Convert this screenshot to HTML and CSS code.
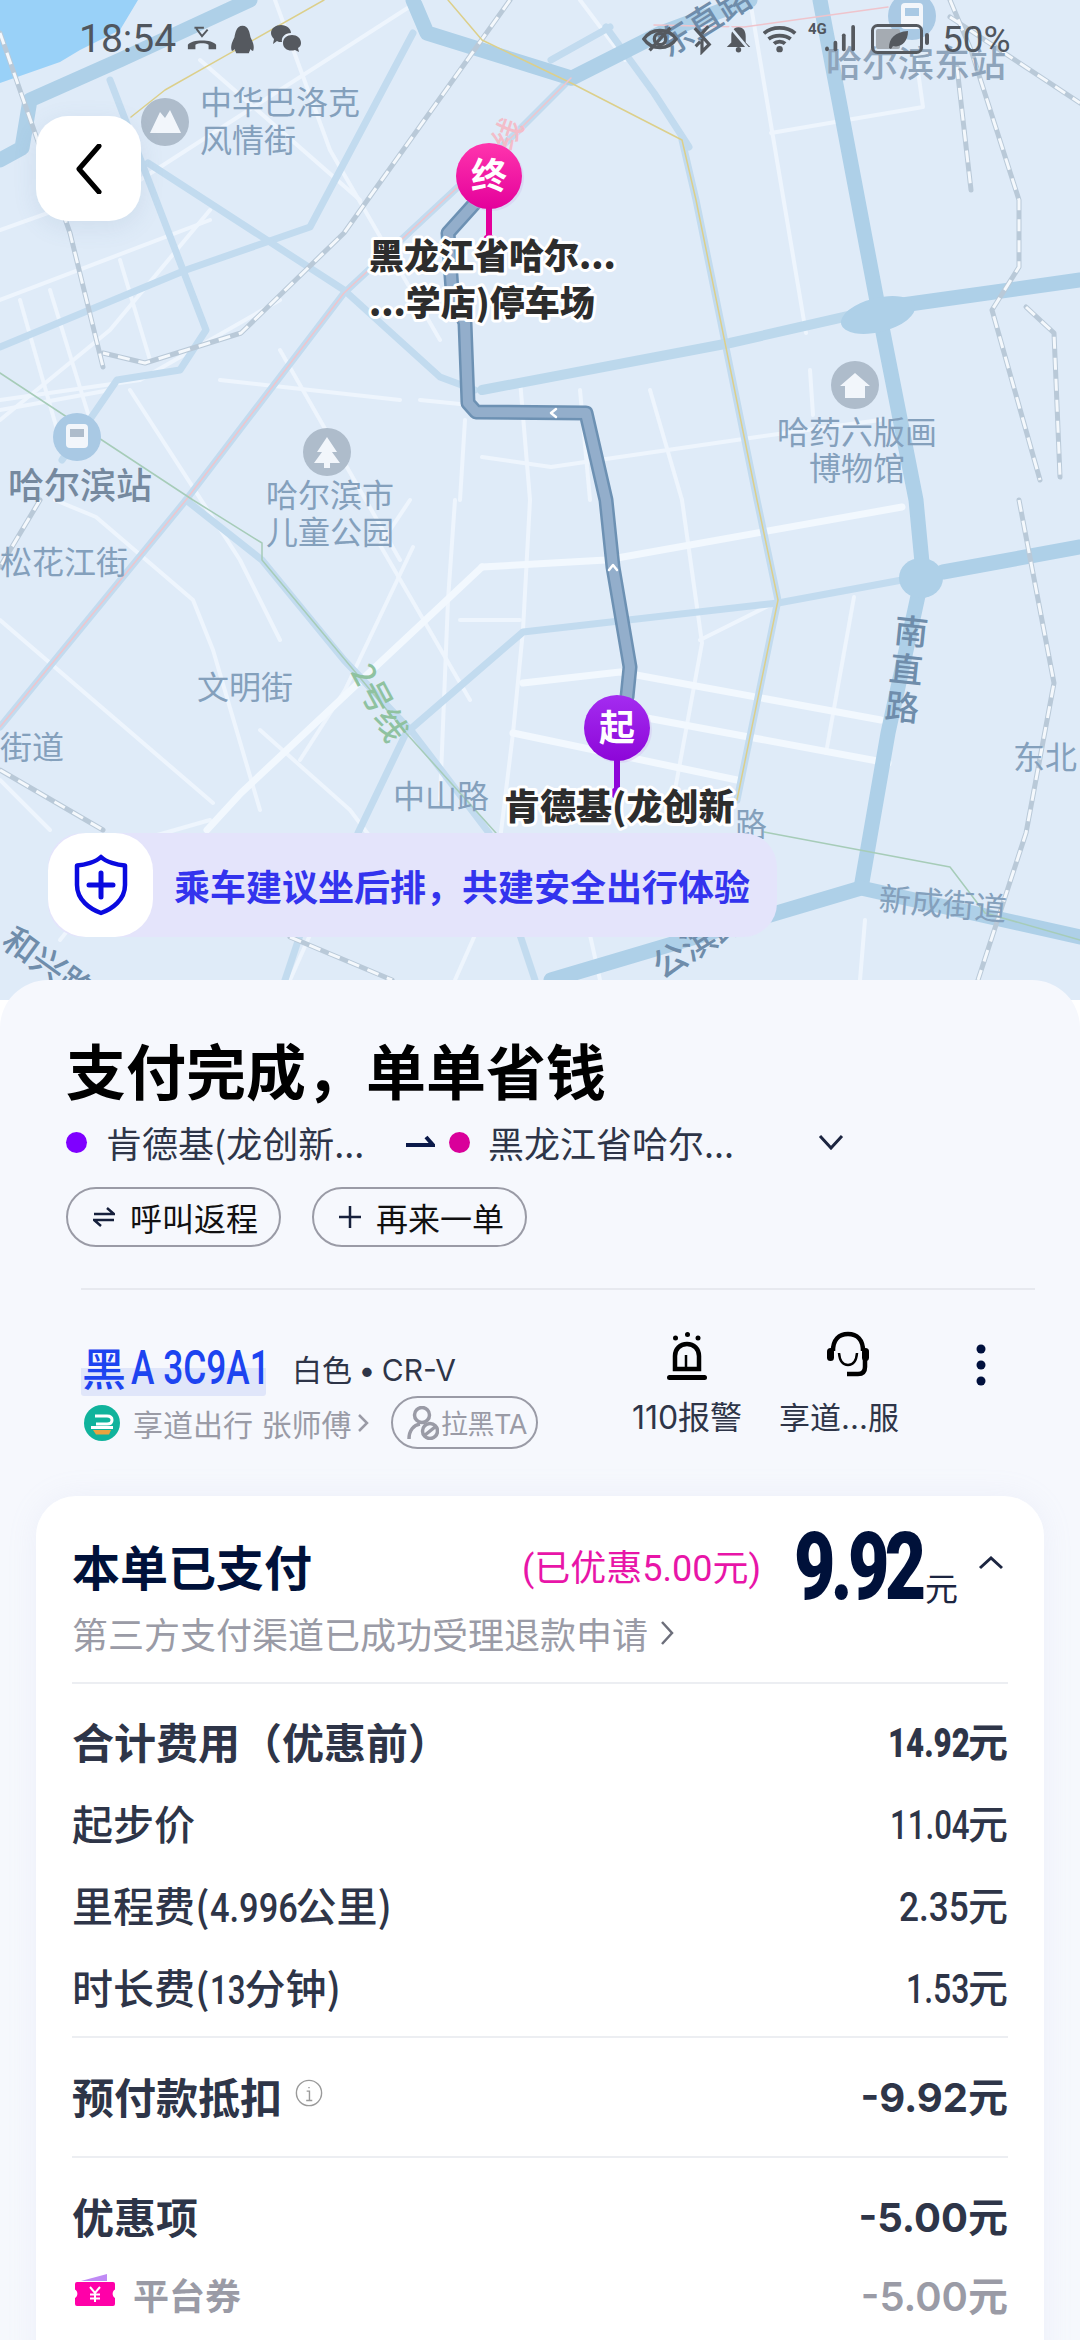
FILE: index.html
```html
<!DOCTYPE html>
<html lang="zh">
<head>
<meta charset="utf-8">
<title>支付完成</title>
<link rel="stylesheet" href="styles.css">
</head>
<body>
<div class="page">
  <section class="map">
    <svg class="map-svg" viewBox="0 0 1080 1000" width="1080" height="1000">
      <defs>
        <linearGradient id="pinEnd" x1="0" y1="0" x2="0" y2="1"><stop offset="0" stop-color="#ff35ad"/><stop offset="1" stop-color="#e4009b"/></linearGradient>
        <linearGradient id="pinStart" x1="0" y1="0" x2="0" y2="1"><stop offset="0" stop-color="#a42cf0"/><stop offset="1" stop-color="#8d06d8"/></linearGradient>
      </defs>
      <path class="water" d="M0 0H138L120 30L80 50L60 62L0 83Z"/>

      <g class="white">
        <path d="M771 133L923 107L916 57"/><path d="M750 0L806 333"/><path d="M580 0L625 60"/>
        <path d="M275 0L330 150L440 340"/><path d="M200 60L360 200"/><path d="M220 380L400 400"/>
        <path d="M0 230L140 180L420 0"/><path d="M0 300L210 220"/><path d="M0 420L110 330L210 210"/>
        <path d="M20 300L60 440"/><path d="M50 290L90 420"/><path d="M120 260L150 360"/>
        <path d="M0 400L140 380L280 300"/><path d="M0 410L110 390"/>
        <path d="M130 390L240 560L280 640"/><path d="M280 350L400 560"/><path d="M420 400L470 405"/>
        <path d="M465 420L460 500"/><path d="M520 380L530 500"/><path d="M580 390L590 500"/>
        <path d="M650 390L682 500"/><path d="M810 370L813 415"/>
        <path d="M482 457L551 467L757 437L880 420"/>
        <path d="M530 500L523 630L513 733L500 840"/><path d="M682 500L702 643L675 790"/>
        <path d="M854 597L826 753"/><path d="M455 500L448 600L440 800"/>
        <path d="M0 620L213 803"/><path d="M55 500L96 517L193 600L213 650L260 810"/>
        <path d="M413 547L345 690L300 760"/><path d="M410 500L380 545L470 700"/>
        <path d="M260 730L350 810L380 850"/><path d="M460 620L520 620"/>
        <path d="M700 640L780 600"/><path d="M0 780L50 830"/>
        <path d="M310 935L290 980"/><path d="M475 935L455 980"/><path d="M590 935L600 980"/><path d="M865 920L860 980"/>
        <path d="M60 940L140 840L210 820"/>
      </g>
      <g class="white-b">
        <path d="M482 567L606 560L902 507"/><path d="M482 567L241 793L207 830"/>
        <path d="M523 683L620 672L881 720"/><path d="M513 733L737 780"/><path d="M647 718L888 763"/>
      </g>

      <g class="mid">
        <path d="M0 347L186 270L310 227L413 33"/>
        <path d="M148 163L344 290L440 377L475 390"/>
        <path d="M110 80L206 330L180 370L117 380L62 460"/>
        <path d="M571 78L516 133L344 293L186 500L0 727"/>
        <path d="M186 500L262 560L344 660L413 733L489 833"/>
        <path d="M682 140L696 200L757 500L778 600L737 800"/>
        <path d="M606 27L654 93L689 147"/><path d="M551 60L610 27"/>
        <path d="M902 580L778 603L523 632L406 733L358 833"/>
        <path d="M300 935L285 980"/><path d="M520 935L535 980"/>
      </g>
      <g class="main">
        <path d="M0 160L22 148L30 100L120 60L250 0"/>
        <path d="M413 0L427 33L571 78"/><path d="M572 78L661 33L750 0"/>
        <path d="M820 0L880 317L916 500L923 573L888 733L861 888"/>
        <path d="M1080 280L888 307"/>
        <path d="M1080 547L943 572"/>
        <path d="M551 980L861 888L1080 937"/>
      </g>
      <path class="main-thin" d="M888 307L730 343L482 390"/>
      <ellipse class="round" cx="878" cy="315" rx="38" ry="17" transform="rotate(-14 878 315)"/>
      <ellipse class="round" cx="921" cy="578" rx="22" ry="20"/>

      <g class="rail-b">
        <path d="M950 0L971 50L1019 200L1019 267L992 310L1040 480"/><path d="M950 17L1080 103"/><path d="M957 67L971 190"/>
        <path d="M1026 307L1054 333L1060 477"/><path d="M1019 500L1054 683L1026 833L978 980"/>
        <path d="M0 33L70 233L103 367"/><path d="M510 0L344 233L241 333L145 363L103 353"/>
        <path d="M0 770L103 830"/><path d="M290 937L392 980"/><path d="M40 500L0 567"/>
      </g>
      <g class="rail-t">
        <path d="M950 0L971 50L1019 200L1019 267L992 310L1040 480"/><path d="M950 17L1080 103"/><path d="M957 67L971 190"/>
        <path d="M1026 307L1054 333L1060 477"/><path d="M1019 500L1054 683L1026 833L978 980"/>
        <path d="M0 33L70 233L103 367"/><path d="M510 0L344 233L241 333L145 363L103 353"/>
        <path d="M0 770L103 830"/><path d="M290 937L392 980"/><path d="M40 500L0 567"/>
      </g>

      <path class="line-yellow" d="M448 0L482 40L571 83L682 140L696 200L757 500L778 600L737 800"/>
      <path class="line-yellow" d="M324 0L165 90L131 117"/>
      <path class="line-pink" d="M571 78L516 133L344 293L186 500L0 727"/>
      <path class="line-pink" d="M654 25L744 27L888 7"/>
      <path class="line-green" d="M0 373L193 500L262 543L262 560L406 733L496 833"/>
      <path class="line-green" d="M764 832L950 867L985 913L1080 940"/>

      <path class="route-edge" d="M475 203L448 233L452 290L465 323L468 403L476 412L586 413L606 500L613 567L630 667L627 697"/>
      <path class="route" d="M475 203L448 233L452 290L465 323L468 403L476 412L586 413L606 500L613 567L630 667L627 697"/>
      <path class="route-arrow" d="M556 409L551 413L556 417"/>
      <path class="route-arrow" d="M609 570L613 565L617 570"/>

      <g class="poi-grey">
        <circle cx="165" cy="122" r="24"/><circle cx="855" cy="385" r="24"/><circle cx="327" cy="452" r="24"/>
      </g>
      <g class="poi-blue">
        <circle cx="77" cy="437" r="24"/><circle cx="912" cy="16" r="24"/>
      </g>
      <path class="poi-shape" d="M150 133L160 112L165 118L170 110L181 133Z"/>
      <path class="poi-shape" d="M855 373L870 386H865V398H845V386H840Z"/>
      <path class="poi-shape" d="M327 437L337 452H332L340 463H330V468H324V463H314L322 452H317Z"/>
      <rect class="poi-shape" x="66" y="424" width="22" height="24" rx="4"/>
      <rect class="poi-win" x="70" y="429" width="14" height="8"/>
      <rect class="poi-shape" x="901" y="3" width="22" height="26" rx="4"/>
      <rect class="poi-blue-win" x="905" y="8" width="14" height="8"/>

      <text class="t-map" x="200" y="114">中华巴洛克</text>
      <text class="t-map" x="200" y="152">风情街</text>
      <text class="t-map-l" x="826" y="77">哈尔滨东站</text>
      <text class="t-road" transform="translate(668 58) rotate(-32)">东直路</text>
      <text class="t-map" x="777" y="444">哈药六版画</text>
      <text class="t-map" x="809" y="480">博物馆</text>
      <text class="t-map-l t-dark" x="8" y="499">哈尔滨站</text>
      <text class="t-map" x="266" y="507">哈尔滨市</text>
      <text class="t-map" x="266" y="544">儿童公园</text>
      <text class="t-map" x="0" y="574">松花江街</text>
      <text class="t-map" x="197" y="699">文明街</text>
      <text class="t-map" x="0" y="759">街道</text>
      <text class="t-map" x="393" y="808">中山路</text>
      <text class="t-map" x="735" y="836">路</text>
      <text class="t-map" x="1013" y="769">东北</text>
      <text class="t-map" transform="translate(878 910) rotate(5)">新成街道</text>
      <text class="t-green" transform="translate(350 672) rotate(62)">2号线</text>
      <text class="t-road" transform="translate(893 642) rotate(6)">南</text>
      <text class="t-road" transform="translate(888 680) rotate(6)">直</text>
      <text class="t-road" transform="translate(884 718) rotate(6)">路</text>
      <text class="t-road" transform="translate(662 980) rotate(-32)">公滨路</text>
      <text class="t-road" transform="translate(0 945) rotate(36)">和兴路</text>
      <text class="t-pink" transform="translate(510 152) rotate(-62)">线</text>

      <circle class="pin-glow" cx="491" cy="178" r="33"/>
      <path class="pin-stem-end" d="M489 205V240"/>
      <circle cx="489" cy="240" r="6" fill="#e4009b"/>
      <circle cx="489" cy="176" r="33" fill="url(#pinEnd)"/>
      <text class="t-pin" x="489" y="189">终</text>
      <circle class="pin-glow" cx="619" cy="730" r="33"/>
      <path class="pin-stem-start" d="M617 755V793"/>
      <circle cx="617" cy="793" r="6" fill="#8d06d8"/>
      <circle cx="617" cy="728" r="33" fill="url(#pinStart)"/>
      <text class="t-pin" x="617" y="741">起</text>

      <text class="t-label" x="369" y="269">黑龙江省哈尔...</text>
      <text class="t-label" x="369" y="316">...学店)停车场</text>
      <text class="t-label t-label-lg" x="504" y="820">肯德基(龙创新</text>
    </svg>

    <div class="status">
      <span class="clock">18:54</span>
      <svg class="st-ic s-call" width="32" height="28" viewBox="0 0 34 28"><path d="M2 25V20C6 14 28 14 32 20V25H24V20C20 18 14 18 10 20V25Z"/><path class="st-line" d="M9 2H19M11 3L17 11L23 4"/></svg>
      <svg class="st-ic s-qq" width="25" height="33" viewBox="0 0 28 33"><path d="M14 1C21 1 22 9 23 14C25 18 28 24 26 29C24 29 24 28 23 27L21 32H7L5 27C4 28 4 29 2 29C0 24 3 18 5 14C6 9 7 1 14 1Z"/></svg>
      <svg class="st-ic s-wx" width="32" height="30" viewBox="0 0 32 30"><path d="M11 1C17 1 21 5 21 9C15 9 11 13 12 18C10 18 8 18 7 17L3 20L4 15C2 13 1 11 1 9C1 4 6 1 11 1Z"/><path d="M22 11C27 11 31 14 31 19C31 21 30 23 28 24L29 28L25 26C19 28 13 25 13 19C13 14 17 11 22 11Z"/></svg>
      <span class="st-space"></span>
      <svg class="st-ic st-thin" width="36" height="28" viewBox="0 0 38 28"><path d="M2 14C10 2 28 2 36 14C28 26 10 26 2 14Z"/><circle cx="19" cy="14" r="6"/><path d="M30 2L8 26"/></svg>
      <svg class="st-ic st-thin s-bt" width="20" height="32" viewBox="0 0 22 32"><path d="M3 4L19 22L11 30V16M18 2L11 10M4 24L9 19"/></svg>
      <svg class="st-ic s-bell" width="27" height="30" viewBox="0 0 30 30"><path d="M15 2C21 2 23 7 23 12V19L28 24H2L7 19V12C7 7 9 2 15 2Z"/><circle cx="15" cy="27" r="3"/><path class="st-cut" d="M5 1L27 27"/></svg>
      <svg class="st-ic st-wifi s-wifi" width="35" height="30" viewBox="0 0 38 30"><path d="M1 9C10 1 26 1 35 9M6 15C12 10 24 10 30 15M12 20C15 17 21 17 24 20"/><circle cx="18" cy="26" r="3.500"/></svg>
      <span class="st-4g">4G</span>
      <svg class="st-ic s-sig" width="32" height="28" viewBox="0 0 34 30"><rect x="0" y="23" width="4" height="5" rx="2"/><rect x="9" y="17" width="4" height="11" rx="2"/><rect x="18" y="9" width="4" height="19" rx="2"/><rect x="28" y="0" width="4" height="28" rx="2"/></svg>
      <svg class="st-ic s-batt" width="58" height="30" viewBox="0 0 58 30"><rect class="st-batt" x="1.500" y="1.500" width="49" height="27" rx="5"/><rect class="st-fill" x="5" y="5" width="24" height="20" rx="2"/><rect x="54" y="9" width="4" height="12" rx="2"/><path d="M18 24C18 14 24 8 37 7C37 18 30 24 22 22L20 25Z"/></svg>
      <span class="st-batt-text">50%</span>
    </div>

    <button class="back" aria-label="返回">
      <svg width="26" height="50" viewBox="0 0 26 50"><path d="M23 2L3 25L23 48"/></svg>
    </button>

    <div class="tip">
      <span class="tip-icon">
        <svg width="56" height="64" viewBox="0 0 56 64"><path class="sh-o" d="M28 4C33 9 44 12 52 12.500V32C52 47 39 56 28 60C17 56 4 47 4 32V12.500C12 12 23 9 28 4Z"/><path class="sh-p" d="M28 20V44M16 32H40"/></svg>
      </span>
      <span class="tip-text">乘车建议坐后排，共建安全出行体验</span>
    </div>
  </section>

  <section class="panel">
    <h1 class="title">支付完成，单单省钱</h1>
    <div class="route-row">
      <span class="dot dot-start"></span>
      <span class="place place-a">肯德基(龙创新...</span>
      <svg class="route-ar" width="30" height="14" viewBox="0 0 30 14"><path d="M1 10H28L21 2"/></svg>
      <span class="dot dot-end"></span>
      <span class="place place-b">黑龙江省哈尔...</span>
      <svg class="chev-down" width="26" height="16" viewBox="0 0 26 16"><path d="M2 2L13 14L24 2"/></svg>
    </div>
    <div class="btn-row">
      <button class="pill-btn"><svg width="22" height="20" viewBox="0 0 22 20"><path d="M1 7H21L14 1M21 13H1L8 19"/></svg>呼叫返程</button>
      <button class="pill-btn"><svg width="22" height="22" viewBox="0 0 22 22"><path d="M11 0V22M0 11H22"/></svg>再来一单</button>
    </div>
    <div class="rule"></div>
    <div class="driver">
      <div class="driver-left">
        <div class="car-row">
          <span class="plate"><span class="plate-cn">黑</span><span class="plate-num">A 3C9A1</span></span>
          <span class="car-desc">白色 • CR-V</span>
        </div>
        <div class="op-row">
          <svg class="op-logo" width="36" height="36" viewBox="0 0 36 36"><circle cx="18" cy="18" r="18" fill="#10b39c"/><path d="M11 11H23Q28 11 28 15Q28 19 23 19H12M7 22.500H29" fill="none" stroke="#fff" stroke-width="3"/><path d="M9 25H27L25 29.500H12Z" fill="#eaa33f"/></svg>
          <span class="op-text">享道出行 张师傅</span>
          <svg class="op-chev" width="12" height="20" viewBox="0 0 12 20"><path d="M2 2L10 10L2 18"/></svg>
          <span class="block-pill">
            <svg width="32" height="34" viewBox="0 0 32 34"><circle class="bk" cx="15" cy="9" r="7.500"/><path class="bk" d="M2 33C2 24 7 19 13 18"/><circle class="bk" cx="23" cy="25" r="7.500"/><path class="bk" d="M18 29L28 21"/></svg>
            拉黑TA
          </span>
        </div>
      </div>
      <div class="actions">
        <div class="action action-alarm">
          <svg width="40" height="49" viewBox="0 0 40 49"><circle class="fill-k" cx="8.500" cy="7" r="2.500"/><circle class="fill-k" cx="20.500" cy="3.500" r="2.500"/><circle class="fill-k" cx="31" cy="7" r="2.500"/><path class="stk-k" d="M8 38V25C8 18 13 13 20 13S32 18 32 25V38Z"/><path class="stk-k2" d="M19 24V36"/><rect class="fill-k" x="0" y="44" width="40" height="5" rx="2.500"/></svg>
          <span class="action-label">110报警</span>
        </div>
        <div class="action action-help">
          <svg class="help-ic" width="44" height="46" viewBox="0 0 44 46"><path class="stk-k" d="M7 20C7 9 13 3 22 3S37 9 37 20"/><rect class="fill-k" x="1" y="17" width="7" height="13" rx="3.500"/><rect class="fill-k" x="36" y="17" width="7" height="13" rx="3.500"/><path class="stk-k" d="M39 28V36Q39 43 32 43H21"/><path class="stk-k2" d="M13 22Q14 34 22 34Q30 34 31 22"/></svg>
          <span class="action-label">享道...服</span>
        </div>
        <svg class="more" width="10" height="42" viewBox="0 0 10 42"><circle cx="5" cy="5" r="4.500"/><circle cx="5" cy="21" r="4.500"/><circle cx="5" cy="37" r="4.500"/></svg>
      </div>
    </div>

    <div class="card">
      <div class="card-head">
        <span class="paid-title">本单已支付</span>
        <span class="saved">(已优惠5.00元)</span>
        <span class="price"><span class="price-num">9.92</span><span class="price-unit">元</span></span>
        <svg class="chev-up" width="26" height="14" viewBox="0 0 26 14"><path d="M2 12L13 2L24 12"/></svg>
      </div>
      <div class="refund">第三方支付渠道已成功受理退款申请<svg width="14" height="26" viewBox="0 0 14 26"><path d="M2 2L12 13L2 24"/></svg></div>
      <div class="card-rule"></div>
      <div class="rows-top">
        <div class="row row-strong"><span>合计费用（优惠前）</span><span class="amt"><b class="narrow n-total">14.92</b>元</span></div>
        <div class="row"><span>起步价</span><span class="amt"><b class="narrow n-base">11.04</b>元</span></div>
        <div class="row"><span>里程费(<i class="narrow n-km">4.996</i>公里)</span><span class="amt"><b class="narrow n-dist">2.35</b>元</span></div>
        <div class="row"><span>时长费(<i class="narrow n-min">13</i>分钟)</span><span class="amt"><b class="narrow n-time">1.53</b>元</span></div>
      </div>
      <div class="card-rule rule-b"></div>
      <div class="row row-strong row-tall">
        <span class="with-info">预付款抵扣<svg width="28" height="28" viewBox="0 0 30 30"><circle cx="15" cy="15" r="13.500"/><path d="M15 8.500V10M12.500 13H15.500V23M12 23H18.500"/></svg></span>
        <span class="amt">-9.92元</span>
      </div>
      <div class="card-rule rule-c"></div>
      <div class="row row-strong row-first">
        <span>优惠项</span><span class="amt">-5.00元</span>
      </div>
      <div class="row row-sub">
        <span class="coupon"><svg width="40" height="33" viewBox="0 0 40 33"><path fill="#c08af5" d="M6 7L32 0V7Z"/><path fill="#ff00a8" d="M2 8H38Q40 8 40 10V15.500A5 5 0 0 0 40 24V30Q40 32 38 32H2Q0 32 0 30V24A5 5 0 0 0 0 15.500V10Q0 8 2 8Z"/><path d="M15 13L20 19L25 13M20 19V28M15 20.500H25M15 24.500H25" fill="none" stroke="#fff" stroke-width="2"/></svg>平台券</span>
        <span class="amt">-5.00元</span>
      </div>
    </div>
  </section>
</div>
</body>
</html>
```

FILE: styles.css
```css
* { box-sizing: border-box; }
html, body { margin: 0; padding: 0; }
body {
  width: 1080px;
  height: 2340px;
  overflow: hidden;
  font-family: Inter, "Noto Sans CJK SC", sans-serif;
  color: #2e3548;
}
.page { width: 1080px; height: 2340px; overflow: hidden; display: flex; flex-direction: column; }

/* map */
.map { position: relative; height: 1000px; flex: none; background: #dfebf8; overflow: hidden; }
.map-svg { display: block; }
.map-svg path { fill: none; stroke-linejoin: round; stroke-linecap: round; }
.map-svg .water { fill: #99d1f8; stroke: none; }
.white path { stroke: #eef5fd; stroke-width: 4; }
.white-b path { stroke: #f2f8fe; stroke-width: 7; }
.mid path { stroke: #c2dbef; stroke-width: 7; }
.main path { stroke: #aed0e8; stroke-width: 15; }
.map-svg .main-thin { stroke: #bcd8ec; stroke-width: 10; }
.round { fill: #aed0e8; }
.rail-b path { stroke: #b9c9d8; stroke-width: 5; }
.rail-t path { stroke: #f4f8fc; stroke-width: 3; stroke-dasharray: 12 9; stroke-linecap: butt; }
.map-svg .line-yellow { stroke: #dccf8a; stroke-width: 1.500; }
.map-svg .line-pink { stroke: #efc4cc; stroke-width: 1.500; }
.map-svg .line-green { stroke: #a6ccb8; stroke-width: 1.500; }
.map-svg .route-edge { stroke: #6d91b3; stroke-width: 15; }
.map-svg .route { stroke: #93aecb; stroke-width: 10; }
.map-svg .route-arrow { stroke: #fff; stroke-width: 2.500; }
.poi-grey circle { fill: #aebccb; }
.poi-blue circle { fill: #a9c9e4; }
.map-svg .poi-shape { fill: #f2f6fb; stroke: none; }
.poi-win { fill: #aebccb; }
.poi-blue-win { fill: #a9c9e4; }
.map-svg text { font-family: "Noto Sans CJK SC", sans-serif; }
.t-map { font-size: 32px; fill: #84a0bc; }
.t-map-l { font-size: 36px; fill: #8ea4bb; font-weight: 500; }
.t-dark { fill: #75899f; }
.t-road { font-size: 34px; fill: #6f8dab; font-weight: 500; }
.t-green { font-size: 32px; fill: #8fc2a0; font-weight: 500; }
.t-pink { font-size: 30px; fill: #f3bdc9; font-weight: 500; }
.t-pin { font-size: 36px; font-weight: 700; fill: #fff; text-anchor: middle; }
.t-label { font-size: 35px; font-weight: 900; fill: #2d2d2d; stroke: #fff; stroke-width: 6px; paint-order: stroke; stroke-linejoin: round; }
.t-label-lg { font-size: 36px; }
.pin-glow { fill: #cdb6ee; opacity: .35; }
.map-svg .pin-stem-end { stroke: #e4009b; stroke-width: 6; stroke-linecap: butt; }
.map-svg .pin-stem-start { stroke: #8d06d8; stroke-width: 6; stroke-linecap: butt; }

/* status bar */
.status {
  position: absolute; top: 14px; left: 79px; right: 72px; height: 50px;
  display: flex; align-items: center; color: #50565e; font-family: Roboto, sans-serif;
}
.clock { font-size: 39px; line-height: 50px; width: 100px; flex: none; }
.st-ic { flex: none; }
.st-ic path, .st-ic rect, .st-ic circle { fill: #55595f; }
.st-ic.st-thin path, .st-ic.st-thin circle { fill: none; stroke: #55595f; stroke-width: 3.500; }
.st-ic.st-wifi path { fill: none; stroke: #55595f; stroke-width: 4; }
.st-ic .st-line { fill: none; stroke: #55595f; stroke-width: 2; }
.st-ic .st-cut { fill: none; stroke: #dfebf8; stroke-width: 3; }
.st-ic .st-batt { fill: none; stroke: #55595f; stroke-width: 3; }
.st-ic .st-fill { fill: #a5abb2; }
.st-space { flex: 1; }
.s-call { margin-left: 7px; }
.s-qq { margin-left: 12px; }
.s-wx { margin-left: 15px; }
.s-bt { margin-left: 14px; }
.s-bell { margin-left: 13px; }
.s-wifi { margin-left: 11px; }
.st-4g { font-size: 15px; font-weight: 700; margin: -20px 0 0 10px; width: 17px; flex: none; }
.s-sig { margin-left: 0; }
.s-batt { margin-left: 14px; }
.st-batt-text { font-size: 37px; margin-left: 13px; width: 66px; flex: none; white-space: nowrap; }

/* over map */
.back {
  position: absolute; left: 36px; top: 116px; width: 105px; height: 105px;
  background: #fff; border: 0; border-radius: 32px; padding: 0;
  display: flex; align-items: center; justify-content: center;
  box-shadow: 0 6px 24px rgba(90, 120, 160, .12);
}
.back svg path { fill: none; stroke: #000; stroke-width: 5; stroke-linecap: round; stroke-linejoin: round; }
.tip {
  position: absolute; left: 48px; top: 833px; width: 729px; height: 104px;
  display: flex; align-items: center; gap: 21px;
  background: #e4e4fb; border-radius: 34px;
}
.tip-icon {
  width: 105px; height: 104px; background: #fff; border-radius: 38px;
  display: flex; align-items: center; justify-content: center; flex: none;
}
.sh-o { fill: none; stroke: #0a0adf; stroke-width: 4.500; stroke-linejoin: round; }
.sh-p { fill: none; stroke: #0a0adf; stroke-width: 5; stroke-linecap: round; }
.tip-text { font-size: 36px; font-weight: 700; color: #3333ee; white-space: nowrap; font-family: "Noto Sans CJK SC", sans-serif; }

/* panel */
.panel {
  margin-top: -20px; position: relative; flex: 1;
  background: #f6f8fd; border-radius: 48px 48px 0 0;
  padding-top: 48px; overflow: hidden;
}
.title {
  margin: 0 0 0 66px; height: 88px; font-size: 60px; line-height: 82px; font-weight: 700; color: #000;
  font-family: "Noto Sans CJK SC", sans-serif;
}
.route-row { display: flex; align-items: center; height: 52px; padding-left: 66px; }
.dot { width: 21px; height: 21px; border-radius: 50%; flex: none; }
.dot-start { background: #7f00ff; }
.dot-end { background: #d9009a; }
.place { font-size: 36px; line-height: 48px; color: #2e3548; white-space: nowrap; font-family: "Noto Sans CJK SC", Inter, sans-serif; }
.place-a { margin-left: 19px; width: 316px; flex: none; }
.place-b { margin-left: 18px; width: 330px; flex: none; }
.route-ar { flex: none; margin-right: 14px; margin-left: -17px; }
.route-ar path { fill: none; stroke: #0b1a4a; stroke-width: 4; }
.chev-down { flex: none; }
.chev-down path, .chev-up path { fill: none; stroke: #1c2540; stroke-width: 3; }
.btn-row { display: flex; gap: 31px; padding-left: 66px; margin-top: 19px; }
.pill-btn {
  width: 215px; height: 60px; border: 2px solid #9a9ba6; border-radius: 30px; background: transparent;
  padding: 0 0 0 25px; display: flex; align-items: center; gap: 15px;
  font-size: 32px; color: #111; font-family: "Noto Sans CJK SC", sans-serif;
}
.pill-btn svg { flex: none; }
.pill-btn path { fill: none; stroke: #16203c; stroke-width: 2.500; }
.rule { height: 2px; margin: 41px 45px 0 81px; background: #e7e9ef; }

.driver { display: flex; height: 206px; padding-top: 41px; padding-left: 81px; }
.driver-left { width: 551px; flex: none; margin-top: 8px; }
.car-row { display: flex; align-items: center; height: 57px; }
.plate {
  display: inline-flex; align-items: center; flex: none; width: 185px; height: 57px;
  background: linear-gradient(transparent 50%, #e0e6fa 50%);
  color: #1d44f0; font-size: 44px; line-height: 57px; white-space: nowrap; border-radius: 3px;
}
.plate-cn { font-weight: 500; font-family: "Noto Sans CJK SC", sans-serif; margin-left: 1px; margin-right: 5px; flex: none; }
.plate-num {
  font-family: Roboto, sans-serif; font-size: 49px; font-weight: 500;
  display: inline-block; width: 135px; flex: none; transform: scaleX(.72); transform-origin: left center;
}
.car-desc { margin-left: 26px; font-size: 30px; color: #2e3548; white-space: nowrap; word-spacing: -2px; }
.op-row { display: flex; align-items: center; height: 53px; color: #9a9ba6; }
.op-logo { flex: none; margin-left: 3px; }
.op-text { margin-left: 13px; font-size: 30px; white-space: nowrap; width: 224px; flex: none; }
.op-chev path { fill: none; stroke: #9a9ba6; stroke-width: 2.500; }
.op-chev { flex: none; margin-left: 0; margin-right: 22px; }
.block-pill {
  height: 53px; width: 147px; flex: none; border: 2.500px solid #9a9ba6; border-radius: 27px;
  display: inline-flex; align-items: center; gap: 2px; padding-left: 14px;
  font-size: 27px; white-space: nowrap; letter-spacing: -.5px;
}
.bk { fill: none; stroke: #9a9ba6; stroke-width: 3.500; }
.actions { display: flex; align-items: flex-start; }
.action { display: flex; flex-direction: column; align-items: center; flex: none; }
.action-alarm { width: 110px; }
.action-help { width: 118px; margin-left: 38px; }
.help-ic { margin-left: 18px; }
.action-label { font-size: 32px; line-height: 40px; margin-top: 18px; white-space: nowrap; color: #2e3548; }
.action-help .action-label { margin-top: 21px; font-size: 31px; }
.fill-k { fill: #000; }
.stk-k { fill: none; stroke: #000; stroke-width: 4.500; }
.stk-k2 { fill: none; stroke: #000; stroke-width: 2.500; }
.more { margin-left: 78px; margin-top: 13px; flex: none; }
.more circle { fill: #00103d; }

.card { margin: 0 36px; background: #fff; border-radius: 40px; padding: 35px 36px 0; box-shadow: 0 0 30px rgba(170, 180, 220, .12); height: 900px; }
.card-head { display: flex; align-items: center; height: 72px; color: #00113a; position: relative; padding-bottom: 4px; }
.paid-title { font-size: 48px; font-weight: 700; white-space: nowrap; font-family: "Noto Sans CJK SC", sans-serif; }
.saved { margin-left: auto; font-size: 36px; color: #e815a8; white-space: nowrap; margin-right: 33px; font-family: Roboto, "Noto Sans CJK SC", sans-serif; }
.price { display: flex; align-items: flex-end; height: 68px; margin-right: 20px; position: relative; top: 2px; }
.price-num {
  font-family: Roboto, sans-serif; font-size: 94px; font-weight: 900; line-height: 68px; color: #00113a; letter-spacing: -6px;
  display: inline-block; width: 131px; flex: none; transform: scaleX(.76); transform-origin: left center; white-space: nowrap;
}
.price-unit { font-size: 33px; line-height: 34px; margin-bottom: -5px; color: #1c2540; }
.chev-up { flex: none; margin: 0 4px 4px 0; }
.refund { display: flex; align-items: center; gap: 12px; height: 60px; font-size: 36px; color: #9a9ba6; white-space: nowrap; font-family: "Noto Sans CJK SC", sans-serif; }
.refund path { fill: none; stroke: #6d6f7b; stroke-width: 2.500; }
.card-rule { height: 2px; background: #eceef2; margin-top: 19px; }
.rule-b { margin-top: 7px; }
.rule-c { margin-top: 0; }
.rows-top { padding-top: 17px; }
.row { display: flex; align-items: center; justify-content: space-between; height: 82px; padding-bottom: 4px; font-size: 41px; font-weight: 500; color: #2e3548; white-space: nowrap; font-family: "Noto Sans CJK SC", sans-serif; }
.row-strong { font-size: 42px; font-weight: 700; }
.row-tall { height: 118px; }
.row-first { margin-top: 18px; }
.row-sub { height: 76px; font-size: 36px; color: #9a9ba6; font-weight: 600; }
.row-strong .amt { font-size: 40px; font-family: Inter, "Noto Sans CJK SC", sans-serif; }
.row-sub .amt { font-family: Inter, "Noto Sans CJK SC", sans-serif; }
.amt { font-size: 40px; }
.narrow {
  display: inline-block; font-family: Roboto, sans-serif; font-style: normal; font-weight: 500; font-size: 40px;
  white-space: nowrap; transform-origin: left center;
}
.n-total { width: 80px; transform: scaleX(.78); font-weight: 900; }
.n-base { width: 78px; transform: scaleX(.78); }
.n-dist { width: 69px; transform: scaleX(.88); }
.n-time { width: 62px; transform: scaleX(.8); }
.n-km { width: 86px; transform: scaleX(.86); }
.n-min { width: 35px; transform: scaleX(.78); }
.with-info { display: flex; align-items: center; gap: 13px; }
.with-info svg { margin-top: -4px; flex: none; }
.with-info path, .with-info circle { fill: none; stroke: #9a9a9a; stroke-width: 1.500; }
.coupon { display: flex; align-items: center; gap: 18px; }
.coupon svg { flex: none; margin-left: 3px; margin-top: -8px; }
```
